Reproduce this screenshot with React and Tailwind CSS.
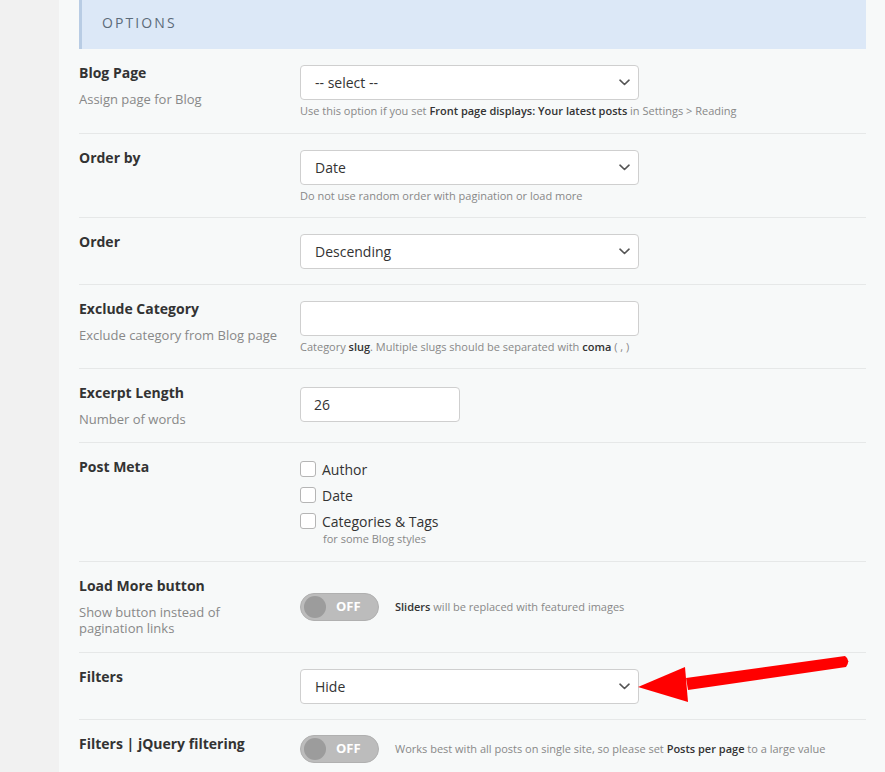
import React from 'react'

const Chevron = () => (
  <svg width="11" height="7" viewBox="0 0 11 7" fill="none" className="shrink-0">
    <path d="M1 1.2L5.5 5.5L10 1.2" stroke="#555" strokeWidth="1.6" strokeLinecap="round" strokeLinejoin="round" />
  </svg>
)

const Select = ({ value }) => (
  <div className="flex h-[35px] w-[339px] items-center justify-between rounded-[4px] border border-[#cfcfcf] bg-white pl-[14px] pr-[8px] text-[14px] text-[#333]">
    <span>{value}</span>
    <Chevron />
  </div>
)

const Help = ({ children, className = '' }) => (
  <div className={`text-[11px] leading-[16px] text-[#888] ${className}`}>{children}</div>
)

const B = ({ children }) => <span className="font-semibold text-[#333]">{children}</span>

const Label = ({ title, desc, descWidth = '' }) => (
  <div className="w-[221px] shrink-0 pt-[14px]">
    <div className="text-[14px] font-bold leading-[20px] text-[#333]">{title}</div>
    {desc && <div className={`mt-[8px] text-[13px] leading-[16px] text-[#888] ${descWidth}`}>{desc}</div>}
  </div>
)

const Toggle = () => (
  <div className="relative flex h-[28px] w-[79px] shrink-0 items-center rounded-full border border-[#b0b0b0] bg-[#bcbcbc]">
    <div className="ml-[3px] h-[22px] w-[22px] rounded-full bg-[#9c9c9c]" />
    <span className="ml-[10px] text-[13px] font-bold text-white">OFF</span>
  </div>
)

const Checkbox = ({ label }) => (
  <div className="flex h-[26px] items-center">
    <div className="h-[16px] w-[16px] rounded-[3px] border border-[#b5b5b5] bg-white" />
    <span className="ml-[6px] text-[14px] text-[#333]">{label}</span>
  </div>
)

const Row = ({ children, className = '' }) => (
  <div className={`flex border-b border-[#e6e8e8] ${className}`}>{children}</div>
)

const App = () => {
  return (
    <div className="relative flex h-[772px] w-full overflow-hidden bg-[#f7f9f9]" style={{ fontFamily: '"Open Sans", "Noto Sans", sans-serif' }}>
      <div className="w-[59px] shrink-0 bg-[#f1f1f1]" />
      <div className="flex-1 pl-[20px] pr-[19px]">
        <div className="flex h-[49px] items-center border-l-[3px] border-[#b8cce4] bg-[#dce8f7] pb-[4px] pl-[20px] text-[14px] tracking-[0.15em] text-[#5c6b7a]">
          OPTIONS
        </div>

        <Row className="h-[85px]">
          <Label title="Blog Page" desc="Assign page for Blog" />
          <div className="pt-[16px]">
            <Select value="-- select --" />
            <Help className="mt-[3px]">
              Use this option if you set <B>Front page displays: Your latest posts</B> in Settings &gt; Reading
            </Help>
          </div>
        </Row>

        <Row className="h-[84px]">
          <Label title="Order by" />
          <div className="pt-[16px]">
            <Select value="Date" />
            <Help className="mt-[3px]">Do not use random order with pagination or load more</Help>
          </div>
        </Row>

        <Row className="h-[67px]">
          <Label title="Order" />
          <div className="pt-[16px]">
            <Select value="Descending" />
          </div>
        </Row>

        <Row className="h-[84px]">
          <Label title="Exclude Category" desc="Exclude category from Blog page" />
          <div className="pt-[16px]">
            <div className="h-[35px] w-[339px] rounded-[4px] border border-[#cfcfcf] bg-white" />
            <Help className="mt-[3px]">
              Category <B>slug</B>. Multiple slugs should be separated with <B>coma</B> ( , )
            </Help>
          </div>
        </Row>

        <Row className="h-[74px]">
          <Label title="Excerpt Length" desc="Number of words" />
          <div className="pt-[18px]">
            <div className="flex h-[35px] w-[160px] items-center rounded-[4px] border border-[#cfcfcf] bg-white pl-[13px] text-[14px] text-[#333]">
              26
            </div>
          </div>
        </Row>

        <Row className="h-[119px]">
          <Label title="Post Meta" />
          <div className="pt-[13px]">
            <Checkbox label="Author" />
            <Checkbox label="Date" />
            <Checkbox label="Categories & Tags" />
            <div className="-mt-[1px] pl-[23px] text-[11px] leading-[12px] text-[#888]">for some Blog styles</div>
          </div>
        </Row>

        <Row className="h-[91px]">
          <Label title="Load More button" desc="Show button instead of pagination links" descWidth="w-[170px]" />
          <div className="flex items-center pt-[31px] self-start">
            <Toggle />
            <Help className="ml-[16px]">
              <B>Sliders</B> will be replaced with featured images
            </Help>
          </div>
        </Row>

        <Row className="h-[67px]">
          <Label title="Filters" />
          <div className="pt-[16px]">
            <Select value="Hide" />
          </div>
        </Row>

        <div className="flex">
          <Label title="Filters | jQuery filtering" />
          <div className="flex items-center self-start pt-[15px]">
            <Toggle />
            <Help className="ml-[16px]">
              Works best with all posts on single site, so please set <B>Posts per page</B> to a large value
            </Help>
          </div>
        </div>
      </div>

      <svg className="pointer-events-none absolute left-0 top-0" width="885" height="772" viewBox="0 0 885 772">
        <path d="M686 678 L845 656 Q851 660 846 667 L688 690 Z" fill="#f00" />
        <path d="M638 687 L685 667 L688 702 Z" fill="#f00" />
      </svg>
    </div>
  )
}

export default App
